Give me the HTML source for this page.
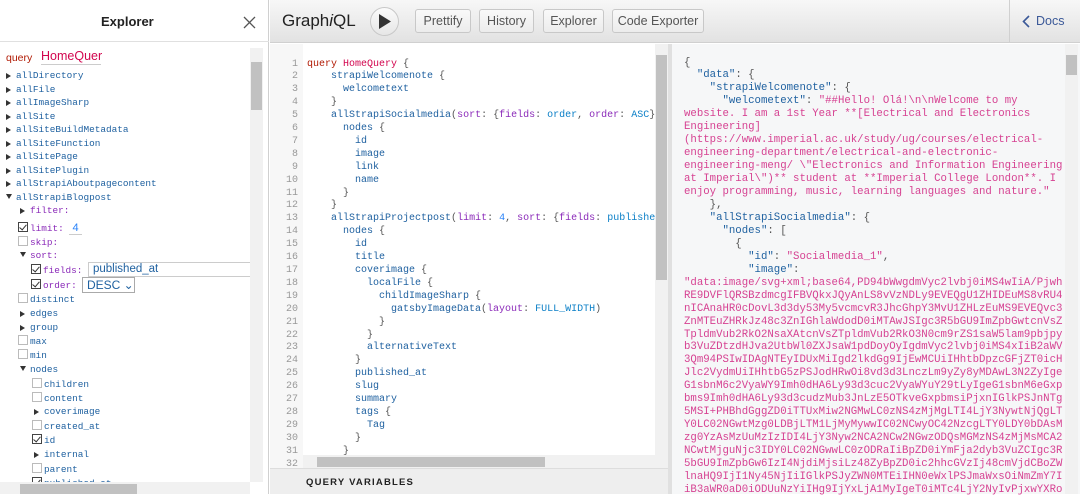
<!DOCTYPE html>
<html><head><meta charset="utf-8"><style>
*{box-sizing:border-box;margin:0;padding:0}
body{width:1080px;height:494px;overflow:hidden;background:#fff;font-family:"Liberation Sans",sans-serif;position:relative}
.a{position:absolute;white-space:pre}
.mono{font-family:"Liberation Mono",monospace}
#exp{position:absolute;left:0;top:0;width:269px;height:494px;border-right:1px solid #d0d0d0;background:#fff}
.el{position:absolute;font-family:"Liberation Mono",monospace;font-size:9.4px;color:#1f61a0;white-space:pre;line-height:12px}
.tri{display:inline-block;width:0;height:0;border-top:3.5px solid transparent;border-bottom:3.5px solid transparent;border-left:5px solid #333;margin-right:5px;vertical-align:-1px}
.trd{display:inline-block;width:0;height:0;border-left:3.5px solid transparent;border-right:3.5px solid transparent;border-top:5px solid #333;margin-right:4px;vertical-align:1px}
.cb{display:inline-block;width:10px;height:10px;border:1px solid #bbb;margin-right:2px;vertical-align:-1px;position:relative}
.cb.on{border-color:#444}
.cb.on:after{content:"";position:absolute;left:2px;top:0px;width:3px;height:6px;border-right:1.3px solid #333;border-bottom:1.3px solid #333;transform:rotate(40deg)}
.arg{color:#8b2bb9}
#bar{position:absolute;left:270px;top:0;width:810px;height:43px;background:linear-gradient(#f7f7f7,#e2e2e2);border-bottom:1px solid #d0d0d0}
.btn{position:absolute;top:9px;height:24px;border:1px solid #c8c8c8;border-radius:3px;background:linear-gradient(#f9f9f9,#ececec);font-size:12.5px;color:#555;line-height:22px;text-align:center}
.q{position:absolute;font-family:"Liberation Mono",monospace;font-size:10px;white-space:pre;line-height:12.9px}
.ln{position:absolute;left:276px;width:22px;text-align:right;font-family:"Liberation Mono",monospace;font-size:10px;color:#999;line-height:12.9px}
.f{color:#1f61a0}.k{color:#b11a04}.d{color:#d2054e}.p{color:#8b2bb9}.n{color:#2882f9}.e{color:#0b7fc7}.g{color:#555}
.r{position:absolute;left:684px;font-family:"Liberation Mono",monospace;font-size:10.7px;white-space:pre;line-height:12.95px;color:#555}
.s{color:#d64292}
</style></head><body>

<div id="exp">
<div style="position:absolute;left:0;top:0;width:269px;height:42px;border-bottom:1px solid #e0e0e0"></div>
<div class="a" style="left:101px;top:14px;font-size:13px;font-weight:bold;color:#222">Explorer</div>
<svg style="position:absolute;left:243px;top:16px" width="13" height="13"><path d="M1 1L12 12M12 1L1 12" stroke="#555" stroke-width="1.3"/></svg>
<div class="a" style="left:6px;top:52px;font-size:10.5px;color:#b11a04">query</div>
<div class="a" style="left:41px;top:49px;font-size:12.5px;color:#d2054e;border-bottom:1px solid #ccc;width:60px;height:16px">HomeQuer</div>
<div class="el" style="left:6px;top:70px"><span class="tri"></span>allDirectory</div>
<div class="el" style="left:6px;top:83.5px"><span class="tri"></span>allFile</div>
<div class="el" style="left:6px;top:97px"><span class="tri"></span>allImageSharp</div>
<div class="el" style="left:6px;top:110.5px"><span class="tri"></span>allSite</div>
<div class="el" style="left:6px;top:124px"><span class="tri"></span>allSiteBuildMetadata</div>
<div class="el" style="left:6px;top:137.5px"><span class="tri"></span>allSiteFunction</div>
<div class="el" style="left:6px;top:151px"><span class="tri"></span>allSitePage</div>
<div class="el" style="left:6px;top:164.5px"><span class="tri"></span>allSitePlugin</div>
<div class="el" style="left:6px;top:178px"><span class="tri"></span>allStrapiAboutpagecontent</div>
<div class="el" style="left:6px;top:192px"><span class="trd"></span>allStrapiBlogpost</div>
<div class="el arg" style="left:20px;top:205px"><span class="tri"></span>filter:</div>
<div class="el arg" style="left:18px;top:222px"><span class="cb on"></span>limit: <span style="color:#2882f9;font-family:'Liberation Sans';font-size:11px;border-bottom:1px solid #ccc">&nbsp;4&nbsp;</span></div>
<div class="el arg" style="left:18px;top:236px"><span class="cb"></span>skip:</div>
<div class="el arg" style="left:20px;top:250px"><span class="trd"></span>sort:</div>
<div class="el arg" style="left:31px;top:264px"><span class="cb on"></span>fields:</div>
<div class="a" style="left:88px;top:262px;width:170px;height:15px;border:1px solid #ccc;font-size:11.5px;color:#1f61a0;padding-left:4px;line-height:13px">published_at</div>
<div class="el arg" style="left:31px;top:279px"><span class="cb on"></span>order:</div>
<div class="a" style="left:82px;top:277px;width:53px;height:16px;border:1px solid #aaa;font-size:12px;color:#1f61a0;padding-left:4px;line-height:14px">DESC &#8964;</div>
<div class="el" style="left:18px;top:293px"><span class="cb"></span>distinct</div>
<div class="el" style="left:20px;top:308px"><span class="tri"></span>edges</div>
<div class="el" style="left:20px;top:322px"><span class="tri"></span>group</div>
<div class="el" style="left:18px;top:335px"><span class="cb"></span>max</div>
<div class="el" style="left:18px;top:349px"><span class="cb"></span>min</div>
<div class="el" style="left:20px;top:364px"><span class="trd"></span>nodes</div>
<div class="el" style="left:32px;top:378px"><span class="cb"></span>children</div>
<div class="el" style="left:32px;top:392px"><span class="cb"></span>content</div>
<div class="el" style="left:34px;top:406px"><span class="tri"></span>coverimage</div>
<div class="el" style="left:32px;top:420px"><span class="cb"></span>created_at</div>
<div class="el" style="left:32px;top:434px"><span class="cb on"></span>id</div>
<div class="el" style="left:34px;top:449px"><span class="tri"></span>internal</div>
<div class="el" style="left:32px;top:463px"><span class="cb"></span>parent</div>
<div class="el" style="left:32px;top:477px"><span class="cb on"></span>published_at</div>
<div style="position:absolute;left:250px;top:48px;width:13px;height:434px;background:#f1f1f1"></div>
<div style="position:absolute;left:251px;top:62px;width:11px;height:48px;background:#c1c1c1"></div>
<div style="position:absolute;left:0;top:482px;width:250px;height:12px;background:#f1f1f1"></div>
<div style="position:absolute;left:20px;top:484px;width:117px;height:10px;background:#c1c1c1"></div>
</div>

<div id="bar">
<div class="a" style="left:12px;top:11px;font-size:17px;color:#222">Graph<i>i</i>QL</div>
<div style="position:absolute;left:100px;top:7px;width:29px;height:29px;border-radius:50%;border:1px solid #c8c8c8;background:linear-gradient(#fbfbfb,#e6e6e6)"></div>
<svg style="position:absolute;left:108px;top:14px" width="14" height="15"><path d="M1 0L13 7.5L1 15Z" fill="#333"/></svg>
<div class="btn" style="left:145px;width:56px">Prettify</div>
<div class="btn" style="left:209px;width:55px">History</div>
<div class="btn" style="left:273px;width:61px">Explorer</div>
<div class="btn" style="left:342px;width:92px">Code Exporter</div>
<div style="position:absolute;left:739px;top:0;width:1px;height:43px;background:#d0d0d0"></div>
<svg style="position:absolute;left:752px;top:15px" width="8" height="13"><path d="M7 1L1.5 6.5L7 12" stroke="#3b5998" stroke-width="1.6" fill="none"/></svg>
<div class="a" style="left:766px;top:14px;font-size:12.5px;color:#3b5998">Docs</div>
</div>

<!-- query editor -->
<div style="position:absolute;left:270px;top:44px;width:33px;height:424px;background:#f7f7f7"></div>
<div style="position:absolute;left:655px;top:44px;width:13px;height:424px;background:#f1f1f1"></div>
<div style="position:absolute;left:656px;top:55px;width:11px;height:225px;background:#c1c1c1"></div>
<div style="position:absolute;left:303px;top:455px;width:352px;height:13px;background:#f1f1f1"></div>
<div style="position:absolute;left:317px;top:457px;width:228px;height:10px;background:#c1c1c1"></div>
<div style="position:absolute;left:270px;top:468px;width:398px;height:26px;background:#eee;border-top:1px solid #ddd"></div>
<div class="a" style="left:306px;top:477px;font-size:9.5px;font-weight:bold;letter-spacing:1.2px;color:#222">QUERY VARIABLES</div>
<div style="position:absolute;left:668px;top:44px;width:4px;height:450px;background:#e0e0e0"></div>

<div class="ln" style="top:58.5px">1<br>2<br>3<br>4<br>5<br>6<br>7<br>8<br>9<br>10<br>11<br>12<br>13<br>14<br>15<br>16<br>17<br>18<br>19<br>20<br>21<br>22<br>23<br>24<br>25<br>26<br>27<br>28<br>29<br>30<br>31<br>32</div>
<div class="q" style="left:307px;top:58.5px;color:#555"><span class="k">query</span> <span class="d">HomeQuery</span> {
    <span class="f">strapiWelcomenote</span> {
      <span class="f">welcometext</span>
    }
    <span class="f">allStrapiSocialmedia</span>(<span class="p">sort</span>: {<span class="p">fields</span>: <span class="e">order</span>, <span class="p">order</span>: <span class="e">ASC</span>}
      <span class="f">nodes</span> {
        <span class="f">id</span>
        <span class="f">image</span>
        <span class="f">link</span>
        <span class="f">name</span>
      }
    }
    <span class="f">allStrapiProjectpost</span>(<span class="p">limit</span>: <span class="n">4</span>, <span class="p">sort</span>: {<span class="p">fields</span>: <span class="e">publishe</span>
      <span class="f">nodes</span> {
        <span class="f">id</span>
        <span class="f">title</span>
        <span class="f">coverimage</span> {
          <span class="f">localFile</span> {
            <span class="f">childImageSharp</span> {
              <span class="f">gatsbyImageData</span>(<span class="p">layout</span>: <span class="e">FULL_WIDTH</span>)
            }
          }
          <span class="f">alternativeText</span>
        }
        <span class="f">published_at</span>
        <span class="f">slug</span>
        <span class="f">summary</span>
        <span class="f">tags</span> {
          <span class="f">Tag</span>
        }
      }</div>

<!-- results -->
<div style="position:absolute;left:672px;top:44px;width:408px;height:450px;background:#f6f7f8"></div>
<div style="position:absolute;left:1065px;top:44px;width:13px;height:450px;background:#f1f1f1"></div>
<div style="position:absolute;left:1066px;top:55px;width:11px;height:20px;background:#c1c1c1"></div>
<div class="r" style="top:56.5px">{
  <span class="f">"data"</span>: {
    <span class="f">"strapiWelcomenote"</span>: {
      <span class="f">"welcometext"</span>: <span class="s">"##Hello! Olá!\n\nWelcome to my</span>
<span class="s">website. I am a 1st Year **[Electrical and Electronics</span>
<span class="s">Engineering]</span>
<span class="s">(https://www.imperial.ac.uk/study/ug/courses/electrical-</span>
<span class="s">engineering-department/electrical-and-electronic-</span>
<span class="s">engineering-meng/ \"Electronics and Information Engineering</span>
<span class="s">at Imperial\")** student at **Imperial College London**. I</span>
<span class="s">enjoy programming, music, learning languages and nature."</span>
    },
    <span class="f">"allStrapiSocialmedia"</span>: {
      <span class="f">"nodes"</span>: [
        {
          <span class="f">"id"</span>: <span class="s">"Socialmedia_1"</span>,
          <span class="f">"image"</span>:
<span class="s">"data:image/svg+xml;base64,PD94bWwgdmVyc2lvbj0iMS4wIiA/Pjwh
RE9DVFlQRSBzdmcgIFBVQkxJQyAnLS8vVzNDLy9EVEQgU1ZHIDEuMS8vRU4
nICAnaHR0cDovL3d3dy53My5vcmcvR3JhcGhpY3MvU1ZHLzEuMS9EVEQvc3
ZnMTEuZHRkJz48c3ZnIGhlaWdodD0iMTAwJSIgc3R5bGU9ImZpbGwtcnVsZ
TpldmVub2RkO2NsaXAtcnVsZTpldmVub2RkO3N0cm9rZS1saW5lam9pbjpy
b3VuZDtzdHJva2UtbWl0ZXJsaW1pdDoyOyIgdmVyc2lvbj0iMS4xIiB2aWV
3Qm94PSIwIDAgNTEyIDUxMiIgd2lkdGg9IjEwMCUiIHhtbDpzcGFjZT0icH
Jlc2VydmUiIHhtbG5zPSJodHRwOi8vd3d3LnczLm9yZy8yMDAwL3N2ZyIge
G1sbnM6c2VyaWY9Imh0dHA6Ly93d3cuc2VyaWYuY29tLyIgeG1sbnM6eGxp
bms9Imh0dHA6Ly93d3cudzMub3JnLzE5OTkveGxpbmsiPjxnIGlkPSJnNTg
5MSI+PHBhdGggZD0iTTUxMiw2NGMwLC0zNS4zMjMgLTI4LjY3NywtNjQgLT
Y0LC02NGwtMzg0LDBjLTM1LjMyMywwIC02NCwyOC42NzcgLTY0LDY0bDAsM
zg0YzAsMzUuMzIzIDI4LjY3Nyw2NCA2NCw2NGwzODQsMGMzNS4zMjMsMCA2
NCwtMjguNjc3IDY0LC02NGwwLC0zODRaIiBpZD0iYmFja2dyb3VuZCIgc3R
5bGU9ImZpbGw6IzI4NjdiMjsiLz48ZyBpZD0ic2hhcGVzIj48cmVjdCBoZW
lnaHQ9IjI1Ny45NjIiIGlkPSJyZWN0MTEiIHN0eWxlPSJmaWxsOiNmZmY7I
iB3aWR0aD0iODUuNzYiIHg9IjYxLjA1MyIgeT0iMTc4LjY2NyIvPjxwYXRo</span></div>

</body></html>
